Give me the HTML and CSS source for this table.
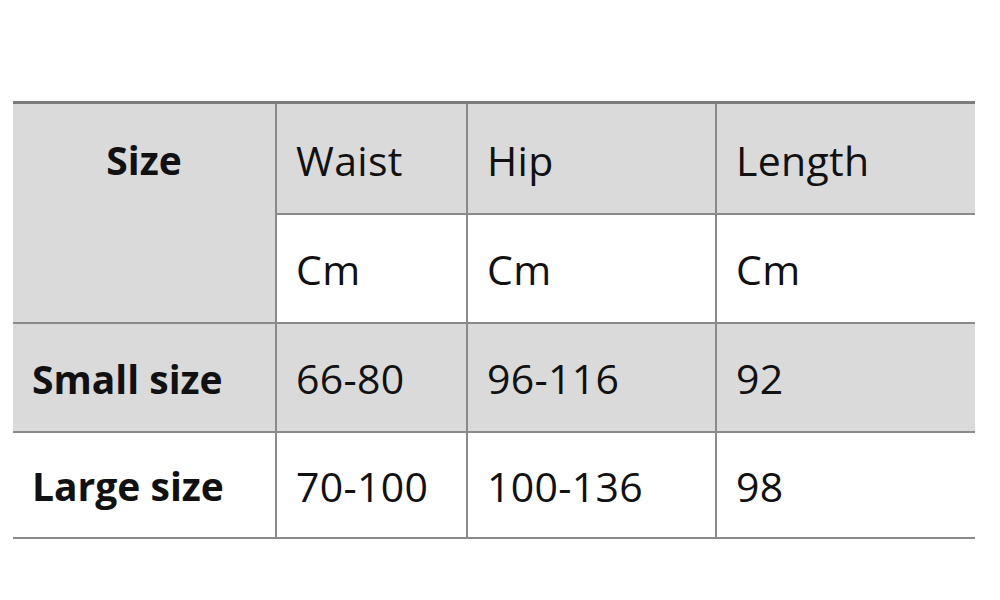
FILE: index.html
```html
<!DOCTYPE html>
<html>
<head>
<meta charset="utf-8">
<link rel="stylesheet" href="styles.css">
</head>
<body>
<div class="page">
  <table class="size-table">
    <colgroup>
      <col class="c1"><col class="c2"><col class="c3"><col class="c4">
    </colgroup>
    <tr class="r1 shade">
      <th rowspan="2" class="label center">Size</th>
      <td>Waist</td>
      <td>Hip</td>
      <td>Length</td>
    </tr>
    <tr class="r2">
      <td>Cm</td>
      <td>Cm</td>
      <td>Cm</td>
    </tr>
    <tr class="r3 shade">
      <th class="label">Small size</th>
      <td>66-80</td>
      <td>96-116</td>
      <td>92</td>
    </tr>
    <tr class="r4">
      <th class="label">Large size</th>
      <td>70-100</td>
      <td>100-136</td>
      <td>98</td>
    </tr>
  </table>
</div>
</body>
</html>
```

FILE: styles.css
```css
html, body {
  margin: 0;
  padding: 0;
  background: #ffffff;
}
.page {
  width: 1000px;
  height: 600px;
  padding-top: 101px;
  padding-left: 13px;
  box-sizing: border-box;
}
.size-table {
  border-collapse: collapse;
  width: 962px;
  table-layout: fixed;
  font-family: "Open Sans", "Noto Sans", sans-serif;
  font-size: 41px;
  letter-spacing: 0.3px;
  color: #111111;
}
.c1 { width: 263px; }
.c2 { width: 191px; }
.c3 { width: 249px; }
.c4 { width: 259px; }
.size-table td, .size-table th {
  border: 2px solid #8a8a8a;
  padding: 4px 0 0 19px;
  text-align: left;
  font-weight: normal;
  vertical-align: middle;
  line-height: 1.2;
}
.size-table tr > :first-child { border-left: none; }
.size-table tr > :last-child { border-right: none; }
.size-table tr.r1 > * { border-top: 3px solid #7c7c7c; }
.r1 { height: 111px; }
.r2 { height: 109px; }
.r3 { height: 109px; }
.r4 { height: 106px; }
.shade > *, .r1 th { background: #dadada; }
.size-table th.label {
  font-weight: bold;
  font-size: 39px;
  letter-spacing: 0;
}
.size-table th.center {
  text-align: center;
  padding: 0 0 104px 0;
}
```
